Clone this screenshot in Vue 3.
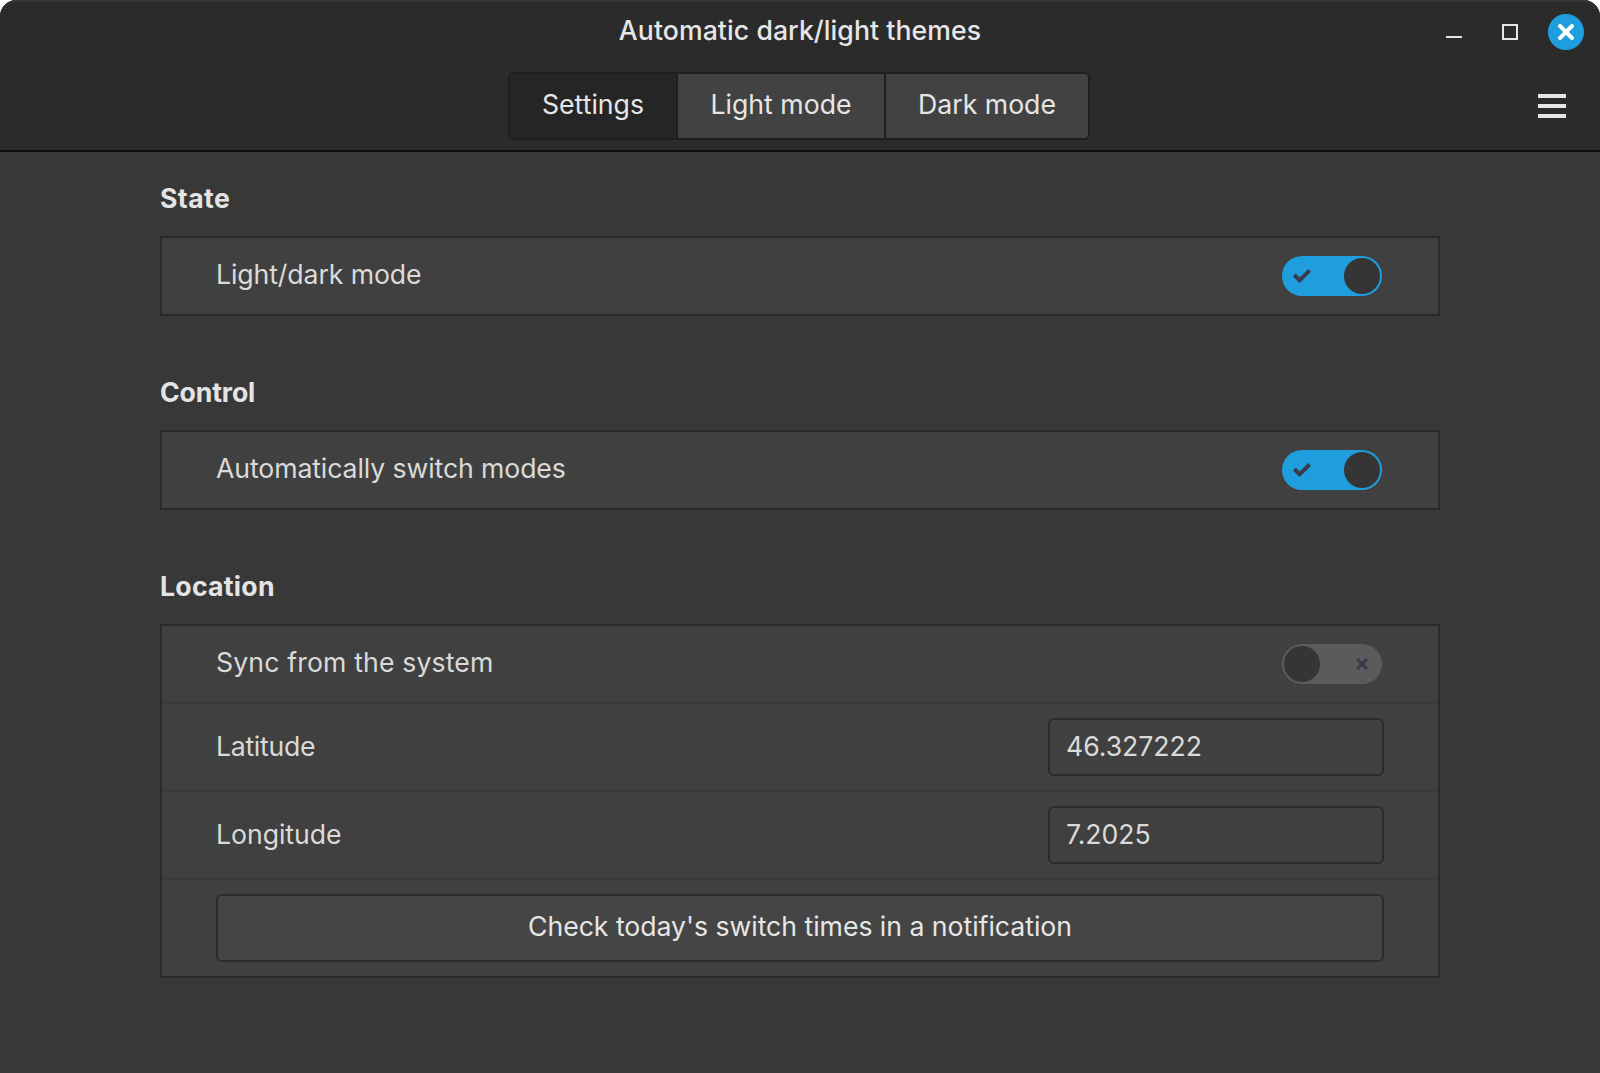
<script setup>
import { ref } from 'vue'

const tabs = ['Settings', 'Light mode', 'Dark mode']
const activeTab = ref('Settings')

const darkMode = ref(true)
const autoSwitch = ref(true)
const syncSystem = ref(false)
const latitude = ref('46.327222')
const longitude = ref('7.2025')
</script>

<template>
  <div class="window">
    <header class="header">
      <div class="titlebar">
        <h1 class="title">Automatic dark/light themes</h1>
        <div class="controls">
          <button class="control" aria-label="Minimize">
            <svg width="16" height="16" viewBox="0 0 16 16"><path d="M0 12h16v2H0z" fill="#e6e6e6" /></svg>
          </button>
          <button class="control" aria-label="Maximize">
            <svg width="16" height="16" viewBox="0 0 16 16"><path d="M1 1h14v14H1z" fill="none" stroke="#e6e6e6" stroke-width="2" /></svg>
          </button>
          <button class="control close" aria-label="Close">
            <svg width="16" height="16" viewBox="0 0 16 16"><path d="M2 2l12 12M14 2L2 14" fill="none" stroke="#fff" stroke-width="4" stroke-linecap="square" /></svg>
          </button>
        </div>
      </div>
      <div class="toolbar">
        <nav class="tabs">
          <button
            v-for="tab in tabs"
            :key="tab"
            class="tab"
            :class="{ active: tab === activeTab }"
            @click="activeTab = tab"
          >{{ tab }}</button>
        </nav>
        <button class="menu" aria-label="Menu">
          <svg width="28" height="24" viewBox="0 0 28 24"><path d="M0 0h28v4H0zM0 10h28v4H0zM0 20h28v4H0z" fill="#e6e6e6" /></svg>
        </button>
      </div>
    </header>

    <main class="content">
      <section class="section">
        <h2 class="heading wide">State</h2>
        <div class="card">
          <div class="row">
            <span class="label mode-label">Light/dark mode</span>
            <button class="switch" :class="{ on: darkMode }" role="switch" aria-label="Light/dark mode" @click="darkMode = !darkMode">
              <svg v-if="darkMode" class="check" width="18" height="14" viewBox="0 0 18 14"><path d="M1.4 6l5.2 5.3L16.6 1.4" /></svg>
              <svg v-else class="cross" width="12" height="12" viewBox="0 0 12 12"><path d="M1 1l10 10M11 1L1 11" /></svg>
              <span class="knob"></span>
            </button>
          </div>
        </div>
      </section>

      <section class="section">
        <h2 class="heading">Control</h2>
        <div class="card">
          <div class="row">
            <span class="label auto-label">Automatically switch modes</span>
            <button class="switch" :class="{ on: autoSwitch }" role="switch" aria-label="Automatically switch modes" @click="autoSwitch = !autoSwitch">
              <svg v-if="autoSwitch" class="check" width="18" height="14" viewBox="0 0 18 14"><path d="M1.4 6l5.2 5.3L16.6 1.4" /></svg>
              <svg v-else class="cross" width="12" height="12" viewBox="0 0 12 12"><path d="M1 1l10 10M11 1L1 11" /></svg>
              <span class="knob"></span>
            </button>
          </div>
        </div>
      </section>

      <section class="section">
        <h2 class="heading location-heading">Location</h2>
        <div class="card">
          <div class="row">
            <span class="label sync-label">Sync from the system</span>
            <button class="switch" :class="{ on: syncSystem }" role="switch" aria-label="Sync from the system" @click="syncSystem = !syncSystem">
              <svg v-if="syncSystem" class="check" width="18" height="14" viewBox="0 0 18 14"><path d="M1.4 6l5.2 5.3L16.6 1.4" /></svg>
              <svg v-else class="cross" width="12" height="12" viewBox="0 0 12 12"><path d="M1 1l10 10M11 1L1 11" /></svg>
              <span class="knob"></span>
            </button>
          </div>
          <div class="row tall">
            <label class="label lat-label" for="lat">Latitude</label>
            <input id="lat" v-model="latitude" class="entry" type="text" />
          </div>
          <div class="row tall">
            <label class="label lon-label" for="lon">Longitude</label>
            <input id="lon" v-model="longitude" class="entry" type="text" />
          </div>
          <div class="row action">
            <button class="notify">Check today's switch times in a notification</button>
          </div>
        </div>
      </section>
    </main>
  </div>
</template>

<style>
body {
  background: #fff;
}
</style>

<style scoped>
* {
  box-sizing: border-box;
}

.window {
  display: flex;
  flex-direction: column;
  height: 1073px;
  overflow: hidden;
  border-radius: 16px 16px 0 0;
  background: #383838;
  color: #dadada;
  font: 400 26.667px/40px Inter, sans-serif;
}

button {
  display: flex;
  align-items: center;
  justify-content: center;
  margin: 0;
  padding: 0;
  border: 0;
  background: none;
  color: inherit;
  font: inherit;
}

svg {
  display: block;
}

.header {
  flex: none;
  height: 152px;
  border-bottom: 2px solid #0e0e0e;
  border-radius: 16px 16px 0 0;
  background: #2b2b2b;
  box-shadow: inset 0 2px #373737;
  color: #e6e6e6;
}

.titlebar {
  display: grid;
  grid-template-columns: 1fr auto 1fr;
  height: 72px;
  padding: 10px 16px 0;
}

.title {
  grid-column: 2;
  margin: 0;
  font-size: inherit;
  font-weight: 500;
  letter-spacing: 0.06px;
}

.controls {
  display: flex;
  justify-content: flex-end;
  gap: 20px;
  padding-top: 4px;
}

.control {
  width: 36px;
  height: 36px;
}

.close {
  border-radius: 50%;
  background: #1f9ede;
}

.close svg {
  overflow: hidden;
  border-radius: 1px;
}

.toolbar {
  display: grid;
  grid-template-columns: 1fr auto 1fr;
  height: 68px;
  padding: 0 34px 0 32px;
}

.tabs {
  grid-column: 2;
  display: flex;
  width: 582px;
  height: 68px;
  border: 2px solid #1f1f1f;
  border-radius: 6px;
  overflow: hidden;
}

.tab {
  flex: none;
  width: 202px;
  padding-bottom: 4px;
  background: #424242;
}

.tab:nth-child(1) {
  width: 166px;
}

.tab:nth-child(2) {
  width: 210px;
  border: solid #1f1f1f;
  border-width: 0 2px;
}

.tab.active {
  background: #252525;
}

.menu {
  justify-self: end;
  height: 68px;
}

.content {
  padding: 26px 160px 0;
}

.section {
  margin-bottom: 56px;
}

.heading {
  height: 58px;
  margin: 0;
  color: #e4e4e4;
  font-size: inherit;
  font-weight: 700;
  letter-spacing: -0.15px;
}

.heading.wide {
  letter-spacing: 0.4px;
}

.heading.location-heading {
  letter-spacing: 0.25px;
}

.card {
  border: 2px solid #2a2a2a;
  background: #404040;
}

.row {
  display: flex;
  align-items: center;
  justify-content: space-between;
  height: 76px;
  padding: 0 54px;
}

.row + .row {
  border-top: 2px solid #3a3a3a;
}

.label {
  padding-bottom: 4px;
}

.mode-label {
  letter-spacing: -0.1px;
}

.auto-label {
  letter-spacing: -0.11px;
}

.sync-label {
  letter-spacing: 0.13px;
}

.tall .label {
  padding-bottom: 2px;
}

.lat-label {
  letter-spacing: -0.3px;
}

.lon-label {
  letter-spacing: -0.05px;
}

.tall {
  height: 88px;
}

.switch {
  flex: none;
  flex-direction: row-reverse;
  justify-content: space-between;
  width: 100px;
  height: 40px;
  margin-right: 2px;
  padding: 0 14px 0 2px;
  border-radius: 20px;
  background: #5b5b5b;
}

.switch.on {
  flex-direction: row;
  padding: 0 2px 0 11px;
  background: #1f9ede;
}

.knob {
  width: 36px;
  height: 36px;
  border-radius: 50%;
  background: #353535;
}

.check path,
.cross path {
  fill: none;
  stroke: #383c4a;
  stroke-width: 4;
}

.cross path {
  stroke-width: 3.2;
}

.entry {
  width: 336px;
  height: 58px;
  padding: 0 16px 2px;
  border: 2px solid #2a2a2a;
  border-radius: 6px;
  outline: 0;
  background: #404040;
  color: #dadada;
  font: inherit;
  letter-spacing: -0.06px;
}

.row.action {
  height: 98px;
}

.notify {
  flex: 1;
  height: 68px;
  padding-bottom: 4px;
  border: 2px solid #2a2a2a;
  border-radius: 6px;
  background: #454545;
  color: #e6e6e6;
  letter-spacing: -0.04px;
}
</style>
